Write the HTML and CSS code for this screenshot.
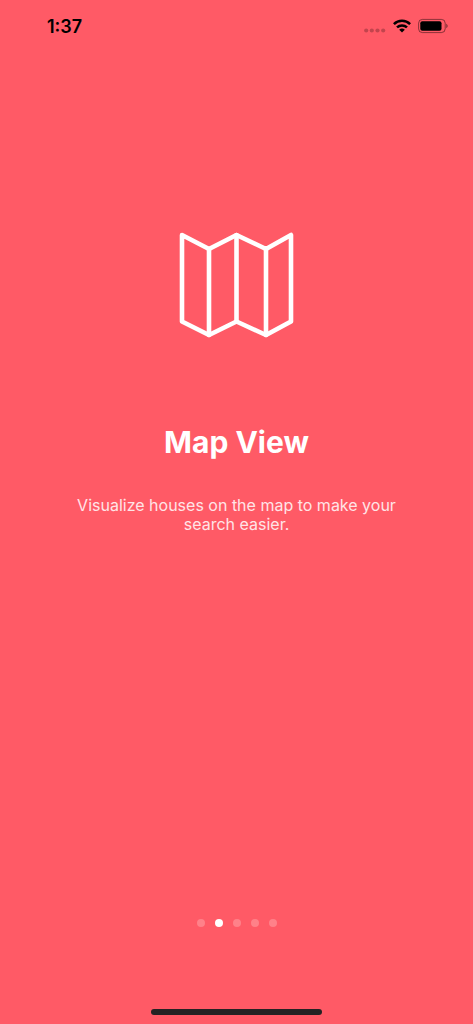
FILE: index.html
```html
<!DOCTYPE html>
<html lang="en">
<head>
<meta charset="utf-8">
<meta name="viewport" content="width=device-width, initial-scale=1">
<title>Map View</title>
<link rel="stylesheet" href="styles.css">
</head>
<body>
<div class="screen">
  <header class="status">
    <time class="clock">1:37</time>
    <div class="indicators">
      <svg class="signal" width="22" height="18" viewBox="0 0 22 18" aria-hidden="true">
        <g fill="#000" fill-opacity=".24"><circle cx="2.2" cy="13.5" r="2.1"/><circle cx="7.8" cy="13.5" r="2.1"/><circle cx="13.5" cy="13.5" r="2.1"/><circle cx="19.2" cy="13.5" r="2.1"/></g>
      </svg>
      <svg class="wifi" width="18" height="18" viewBox="0 0 18 18" aria-hidden="true">
        <g fill="none" stroke="#000" stroke-width="2.5"><path d="M.9 7.100a11.600 11.600 0 0 1 16.200 0"/><path d="M4 10.400a7.200 7.200 0 0 1 10 0"/></g>
        <path d="M6.200 12.800a4.100 4.100 0 0 1 5.600 0L9 15.600z"/>
      </svg>
      <svg class="battery" width="30" height="18" viewBox="0 0 30 18" aria-hidden="true">
        <rect x=".6" y="2.4" width="26.600" height="13.200" rx="3.800" fill="none" stroke="#000" stroke-opacity=".45"/>
        <rect x="2.300" y="4.200" width="21.200" height="9.600" rx="2"/>
        <path d="M28.200 6.800v4.400c.9-.4 1.500-1.200 1.500-2.200s-.6-1.800-1.500-2.200z" fill-opacity=".45"/>
      </svg>
    </div>
  </header>
  <main class="page">
    <svg class="map" width="116" height="106" viewBox="0 0 116 106" aria-hidden="true">
      <g fill="none" stroke="#fff" stroke-width="4.600" stroke-linecap="round" stroke-linejoin="round"><path d="M3 3 30 17 57.500 3 87 17 112 3V89.500L87 103 57.500 89.500 30 103 3 89.500z"/><path d="M30 17V103M57.500 3V89.500M87 17V103"/></g>
    </svg>
    <h1 class="title">Map View</h1>
    <p class="text">Visualize houses on the map to make your search easier.</p>
  </main>
  <nav class="dots" aria-label="Pages">
    <button class="dot" type="button" aria-label="Page 1"></button>
    <button class="dot active" type="button" aria-label="Page 2" aria-current="page"></button>
    <button class="dot" type="button" aria-label="Page 3"></button>
    <button class="dot" type="button" aria-label="Page 4"></button>
    <button class="dot" type="button" aria-label="Page 5"></button>
  </nav>
  <div class="home"></div>
</div>
</body>
</html>
```
FILE: styles.css
```css
* {
  box-sizing: border-box;
}

body {
  margin: 0;
  background: #ff5a66;
  color: #fff;
  font-family: Inter, "Liberation Sans", sans-serif;
}

.screen {
  display: flex;
  flex-direction: column;
  align-items: center;
  min-height: 100vh;
  padding-bottom: 9px;
}

.status {
  display: flex;
  align-items: center;
  justify-content: space-between;
  align-self: stretch;
  height: 52px;
  padding: 0 25px 0 47px;
  color: #000;
}

.clock {
  padding-top: 2px;
  font-size: 18px;
  font-weight: 600;
  line-height: 24px;
}

.indicators {
  display: flex;
  align-items: center;
  gap: 7px;
}

.page {
  display: flex;
  flex: 1;
  flex-direction: column;
  align-items: center;
  padding: 180px 72px 0;
}

.title {
  margin: 84px 0 0;
  font-size: 30px;
  font-weight: 700;
  line-height: 40px;
}

.text {
  max-width: 330px;
  margin: 34px 0 0;
  color: #ffe4e6;
  font-size: 16px;
  line-height: 19px;
  text-align: center;
}

.dots {
  display: flex;
  gap: 10px;
  margin-bottom: 82px;
}

.dot {
  width: 8px;
  height: 8px;
  padding: 0;
  border: 0;
  border-radius: 50%;
  background: #ff8189;
}

.active {
  background: #fff;
}

.home {
  width: 36%;
  height: 6px;
  border-radius: 3px;
  background: #252223;
}
```
